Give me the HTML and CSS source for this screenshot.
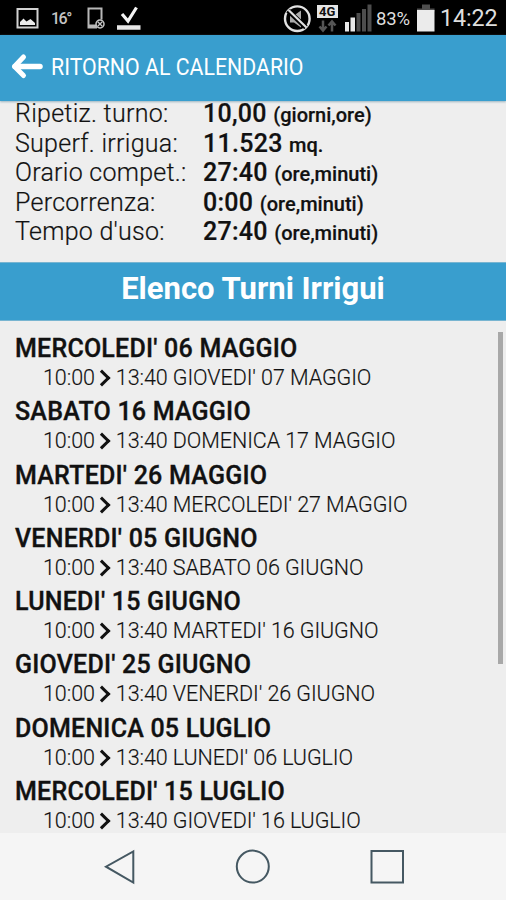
FILE: index.html
```html
<!DOCTYPE html>
<html lang="it">
<head>
<meta charset="utf-8">
<meta name="viewport" content="width=device-width, initial-scale=1">
<title>Elenco Turni Irrigui</title>
<link rel="stylesheet" href="styles.css">
</head>
<body>
<div class="screen">
  <div class="status">
    <svg class="status-left" width="150" height="35" viewBox="0 0 150 35" fill="none">
      <rect x="17.500" y="9" width="20" height="18.500" stroke="#d2d2d2" stroke-width="2"/>
      <path d="M20 25v-3l3.500-3.500 3 3 4-2.500 4.500 4v2z" fill="#ececec"/>
      <path d="M97 27.500h-8.500v-19h13v11" stroke="#b8b8b8" stroke-width="2"/>
      <path d="M88 26h8" stroke="#b8b8b8" stroke-width="3"/>
      <circle cx="100" cy="24" r="4" stroke="#c8c8c8" stroke-width="1.500"/>
      <path d="M97.500 21.500l5 5m0-5l-5 5" stroke="#c8c8c8" stroke-width="1.300"/>
      <path d="M122 14l6 7L136.500 7.500" stroke="#f4f4f4" stroke-width="3.200"/>
      <path d="M117 27.500h23.500" stroke="#e8e8e8" stroke-width="4.500"/>
    </svg>
    <span class="temp">16°</span>
    <svg class="status-mid" width="92" height="35" viewBox="282 0 92 35" fill="none">
      <circle cx="297.300" cy="18.700" r="12.300" stroke="#e2e2e2" stroke-width="2.400"/>
      <path d="M290 15.500h4l7-5v17l-7-5h-4z" fill="#aaa"/>
      <path d="M288 10.500l18 17" stroke="#000" stroke-width="5"/>
      <path d="M288.500 10l18 17.500" stroke="#e2e2e2" stroke-width="2.200"/>
      <rect x="317" y="5" width="21" height="13" fill="#e5e5e5"/>
      <path d="M323 20.500v10m-3.500-4l3.500 4 3.500-4M332 31.500v-10m-3.500 4l3.500-4 3.500 4" stroke="#555" stroke-width="2.500"/>
      <path d="M345 22h4v9.500h-4zM350.500 17.500h4.500v14h-4.500z" fill="#e8e8e8"/>
      <path d="M356.500 13h4v18.500h-4zM362 9h4v22.500h-4zM367.500 4.500h4v27h-4z" fill="#4d4d4d"/>
    </svg>
    <span class="network">4G</span>
    <span class="percent">83%</span>
    <svg class="battery" width="19" height="35" viewBox="416 0 19 35">
      <path d="M422 4.500h8v4h4.500v3h-17.500v-3h5z" fill="#4f4f4f"/>
      <path d="M417 10h17.500v21.500h-17.500z" fill="#ebebeb"/>
    </svg>
    <span class="clock">14:22</span>
  </div>
  <header class="appbar">
    <svg width="32" height="28" viewBox="0 0 32 28" fill="none" stroke="#fff" stroke-linecap="round" stroke-linejoin="round">
      <path d="M12.500 4L3.500 13.500l9 9" stroke-width="5"/><path d="M4 13.500h25" stroke-width="5.500"/>
    </svg>
    <span class="back-label">RITORNO AL CALENDARIO</span>
  </header>
  <dl class="details">
    <dt>Ripetiz. turno:</dt><dd>10,00 <small>(giorni,ore)</small></dd>
    <dt>Superf. irrigua:</dt><dd>11.523 <small>mq.</small></dd>
    <dt>Orario compet.:</dt><dd>27:40 <small>(ore,minuti)</small></dd>
    <dt>Percorrenza:</dt><dd>0:00 <small>(ore,minuti)</small></dd>
    <dt>Tempo d'uso:</dt><dd>27:40 <small>(ore,minuti)</small></dd>
  </dl>
  <h1 class="section">Elenco Turni Irrigui</h1>
  <main class="turns">
    <article><h2>MERCOLEDI' 06 MAGGIO</h2><p><span>10:00</span><i class="chevron"></i><span>13:40 GIOVEDI' 07 MAGGIO</span></p></article>
    <article><h2>SABATO 16 MAGGIO</h2><p><span>10:00</span><i class="chevron"></i><span>13:40 DOMENICA 17 MAGGIO</span></p></article>
    <article><h2>MARTEDI' 26 MAGGIO</h2><p><span>10:00</span><i class="chevron"></i><span>13:40 MERCOLEDI' 27 MAGGIO</span></p></article>
    <article><h2>VENERDI' 05 GIUGNO</h2><p><span>10:00</span><i class="chevron"></i><span>13:40 SABATO 06 GIUGNO</span></p></article>
    <article><h2>LUNEDI' 15 GIUGNO</h2><p><span>10:00</span><i class="chevron"></i><span>13:40 MARTEDI' 16 GIUGNO</span></p></article>
    <article><h2>GIOVEDI' 25 GIUGNO</h2><p><span>10:00</span><i class="chevron"></i><span>13:40 VENERDI' 26 GIUGNO</span></p></article>
    <article><h2>DOMENICA 05 LUGLIO</h2><p><span>10:00</span><i class="chevron"></i><span>13:40 LUNEDI' 06 LUGLIO</span></p></article>
    <article><h2>MERCOLEDI' 15 LUGLIO</h2><p><span>10:00</span><i class="chevron"></i><span>13:40 GIOVEDI' 16 LUGLIO</span></p></article>
    <div class="scrollbar"></div>
  </main>
  <nav class="navbar">
    <svg width="506" height="67" viewBox="0 833 506 67" fill="none" stroke="#455862" stroke-width="2">
      <path d="M133.300 851.500v31L106 866.700z"/>
      <circle cx="252.800" cy="866.600" r="16"/>
      <rect x="371.500" y="851" width="31.500" height="31.500"/>
    </svg>
  </nav>
</div>
</body>
</html>
```
FILE: styles.css
```css
* { box-sizing: border-box; }
body { margin: 0; font-family: Roboto, sans-serif; color: #111; background: #eee; }
.screen { width: 506px; height: 900px; overflow: hidden; display: flex; flex-direction: column; }
.status { position: relative; flex: none; height: 35px; background: #000; color: #dedede; display: flex; align-items: center; white-space: nowrap; }
.status-left { flex: none; width: 150px; }
.status-mid { flex: none; margin-left: 132px; }
.temp { position: absolute; left: 51px; top: 9px; font-size: 16px; line-height: 19px; font-weight: 500; letter-spacing: -1.500px; color: #c4c4c4; }
.network { position: absolute; left: 319px; top: 5px; font-size: 13px; line-height: 13px; font-weight: 700; color: #111; }
.percent { width: 40px; margin-left: 2px; padding-top: 2px; font-size: 18.500px; letter-spacing: -.2px; }
.battery { flex: none; margin-left: 0; }
.clock { margin-left: 5px; padding-top: 2px; font-size: 23.300px; line-height: 35px; letter-spacing: -.1px; }
.appbar { flex: none; height: 66px; background: #399ece; color: #fff; display: flex; align-items: center; padding: 0 0 2px 11px; box-shadow: 0 1px 2px #9bb4c0; position: relative; }
.appbar svg { flex: none; }
.back-label { font-size: 24px; margin-left: 8px; white-space: nowrap; transform: scaleX(.888); transform-origin: left; }
.details { flex: none; height: 161px; margin: 0; padding: 0 0 0 15px; display: grid; grid-template-columns: 188px 1fr; grid-auto-rows: 29.500px; align-content: start; line-height: 26px; white-space: nowrap; font-size: 25px; }
.details dt { font-weight: 300; letter-spacing: .27px; -webkit-text-stroke: .2px #111; }
.details dd { margin: 0; font-weight: 500; letter-spacing: .27px; -webkit-text-stroke: .2px #111; }
.details small { font-size: 20px; letter-spacing: 0; }
.section { flex: none; height: 59px; margin: 0; background: #399ece; border-top: 1px solid #78b5d1; border-bottom: 1px solid #78b5d1; color: #fff; text-align: center; font-size: 31px; line-height: 52px; font-weight: 700; }
.turns { flex: none; height: 512px; padding: 12px 15px 0; overflow: hidden; position: relative; white-space: nowrap; }
.turns article { height: 63.300px; }
.turns h2 { margin: 0; font-size: 25px; line-height: 32px; font-weight: 500; letter-spacing: .22px; -webkit-text-stroke: .35px #111; }
.turns p { margin: -1px 0 0; padding-left: 28px; display: flex; align-items: center; font-size: 21.500px; line-height: 28px; font-weight: 300; letter-spacing: -.08px; -webkit-text-stroke: .15px #111; }
.chevron { flex: none; width: 12px; height: 12px; border-top: 3px solid #111; border-right: 3px solid #111; transform: rotate(45deg); margin: 0 8px 0 1px; }
.scrollbar { position: absolute; right: 3px; top: 11px; width: 5px; height: 332px; background: #a8a8a8; }
.navbar { flex: none; height: 67px; background: #f5f5f5; }
.navbar svg { display: block; }
```
